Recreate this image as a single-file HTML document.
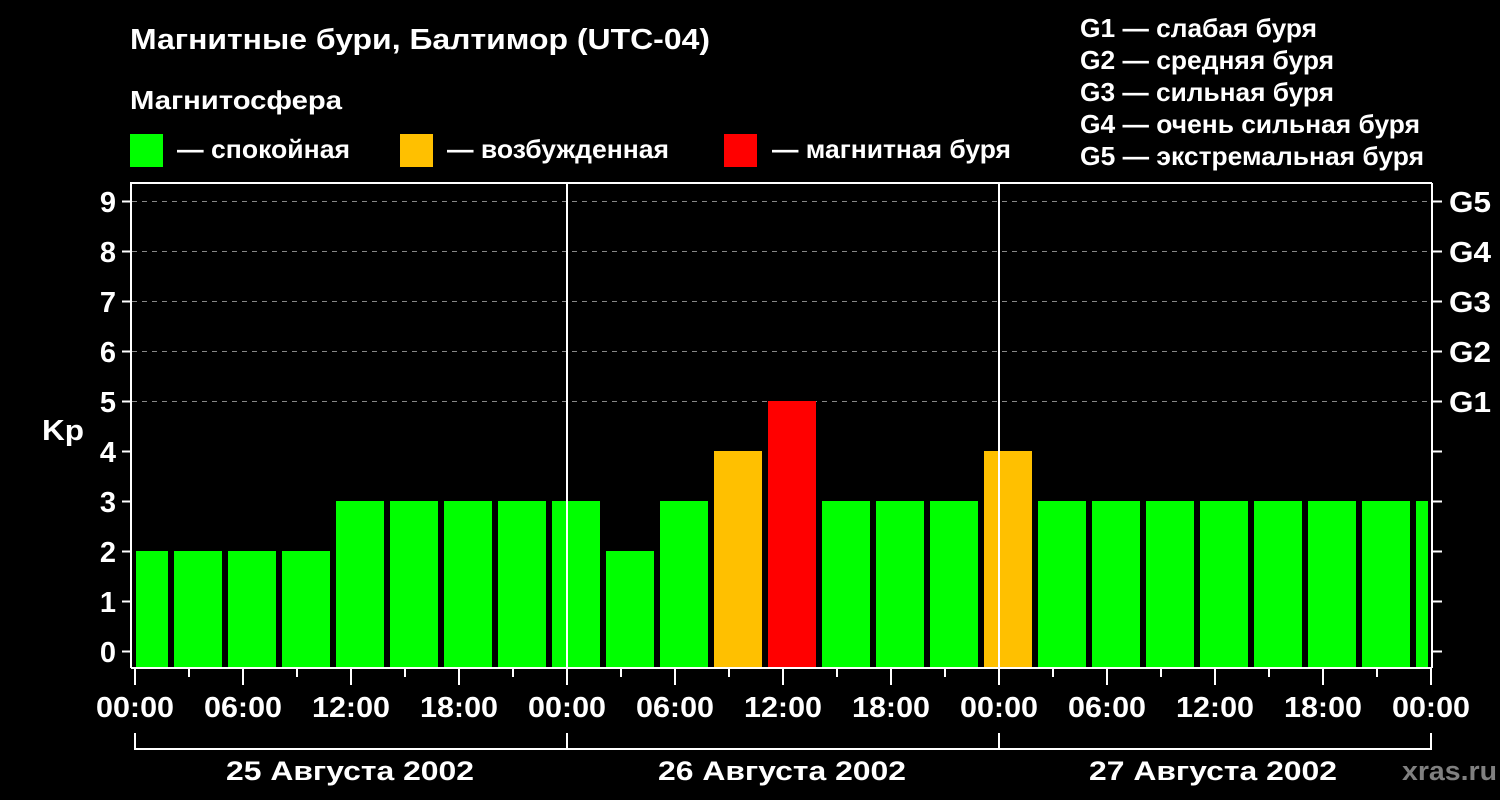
<!DOCTYPE html>
<html><head><meta charset="utf-8"><style>
html,body{margin:0;padding:0;background:#000;}
svg{display:block;font-family:"Liberation Sans",sans-serif;font-weight:bold;}
</style></head><body>
<svg width="1500" height="800" viewBox="0 0 1500 800" xmlns="http://www.w3.org/2000/svg">
<rect width="1500" height="800" fill="#000"/>
<g fill="#fff" font-size="26" lengthAdjust="spacingAndGlyphs">
<text x="130" y="49" font-size="29" textLength="580" lengthAdjust="spacingAndGlyphs">Магнитные бури, Балтимор (UTC-04)</text>
<text x="130" y="109" textLength="212" lengthAdjust="spacingAndGlyphs">Магнитосфера</text>
<text x="177" y="158" textLength="173" lengthAdjust="spacingAndGlyphs">— спокойная</text>
<text x="447" y="158" textLength="222" lengthAdjust="spacingAndGlyphs">— возбужденная</text>
<text x="772" y="158" textLength="239" lengthAdjust="spacingAndGlyphs">— магнитная буря</text>
<text x="1080" y="37" textLength="237" lengthAdjust="spacingAndGlyphs">G1 — слабая буря</text>
<text x="1080" y="69" textLength="254" lengthAdjust="spacingAndGlyphs">G2 — средняя буря</text>
<text x="1080" y="101" textLength="254" lengthAdjust="spacingAndGlyphs">G3 — сильная буря</text>
<text x="1080" y="133" textLength="340" lengthAdjust="spacingAndGlyphs">G4 — очень сильная буря</text>
<text x="1080" y="165" textLength="344" lengthAdjust="spacingAndGlyphs">G5 — экстремальная буря</text>
</g>
<rect x="130" y="134" width="33" height="33" fill="#00ff00"/>
<rect x="400" y="134" width="33" height="33" fill="#ffc000"/>
<rect x="724" y="134" width="33" height="33" fill="#ff0000"/>
<g stroke="#888" stroke-width="1" stroke-dasharray="5,5">
<line x1="132" y1="201.5" x2="1432" y2="201.5"/>
<line x1="132" y1="251.5" x2="1432" y2="251.5"/>
<line x1="132" y1="301.5" x2="1432" y2="301.5"/>
<line x1="132" y1="351.5" x2="1432" y2="351.5"/>
<line x1="132" y1="401.5" x2="1432" y2="401.5"/>
</g>
<g fill="#00ff00">
<rect x="136" y="551" width="32" height="117"/>
<rect x="174" y="551" width="48" height="117"/>
<rect x="228" y="551" width="48" height="117"/>
<rect x="282" y="551" width="48" height="117"/>
<rect x="336" y="501" width="48" height="167"/>
<rect x="390" y="501" width="48" height="167"/>
<rect x="444" y="501" width="48" height="167"/>
<rect x="498" y="501" width="48" height="167"/>
<rect x="552" y="501" width="48" height="167"/>
<rect x="606" y="551" width="48" height="117"/>
<rect x="660" y="501" width="48" height="167"/>
<rect x="822" y="501" width="48" height="167"/>
<rect x="876" y="501" width="48" height="167"/>
<rect x="930" y="501" width="48" height="167"/>
<rect x="1038" y="501" width="48" height="167"/>
<rect x="1092" y="501" width="48" height="167"/>
<rect x="1146" y="501" width="48" height="167"/>
<rect x="1200" y="501" width="48" height="167"/>
<rect x="1254" y="501" width="48" height="167"/>
<rect x="1308" y="501" width="48" height="167"/>
<rect x="1362" y="501" width="48" height="167"/>
<rect x="1416" y="501" width="12" height="167"/>
</g>
<rect x="714" y="451" width="48" height="217" fill="#ffc000"/>
<rect x="984" y="451" width="48" height="217" fill="#ffc000"/>
<rect x="768" y="401" width="48" height="267" fill="#ff0000"/>
<line x1="567" y1="183" x2="567" y2="668" stroke="#fff" stroke-width="2"/>
<line x1="999" y1="183" x2="999" y2="668" stroke="#fff" stroke-width="2"/>
<g stroke="#fff" stroke-width="2" fill="none">
<polyline points="131,668 131,183 1432,183"/>
<line x1="131" y1="668" x2="1432" y2="668"/>
<line x1="1432" y1="183" x2="1432" y2="668"/>
</g>
<g stroke="#fff" stroke-width="2">
<line x1="122" y1="201.5" x2="131" y2="201.5"/><line x1="122" y1="251.5" x2="131" y2="251.5"/>
<line x1="122" y1="301.5" x2="131" y2="301.5"/><line x1="122" y1="351.5" x2="131" y2="351.5"/>
<line x1="122" y1="401.5" x2="131" y2="401.5"/><line x1="122" y1="451.5" x2="131" y2="451.5"/>
<line x1="122" y1="501.5" x2="131" y2="501.5"/><line x1="122" y1="551.5" x2="131" y2="551.5"/>
<line x1="122" y1="601.5" x2="131" y2="601.5"/><line x1="122" y1="651.5" x2="131" y2="651.5"/>
<line x1="1432" y1="201.5" x2="1442" y2="201.5"/><line x1="1432" y1="251.5" x2="1442" y2="251.5"/>
<line x1="1432" y1="301.5" x2="1442" y2="301.5"/><line x1="1432" y1="351.5" x2="1442" y2="351.5"/>
<line x1="1432" y1="401.5" x2="1442" y2="401.5"/><line x1="1432" y1="451.5" x2="1442" y2="451.5"/>
<line x1="1432" y1="501.5" x2="1442" y2="501.5"/><line x1="1432" y1="551.5" x2="1442" y2="551.5"/>
<line x1="1432" y1="601.5" x2="1442" y2="601.5"/><line x1="1432" y1="651.5" x2="1442" y2="651.5"/>
</g>
<g fill="#fff" font-size="29" text-anchor="end">
<text x="116" y="212">9</text><text x="116" y="262">8</text><text x="116" y="312">7</text>
<text x="116" y="362">6</text><text x="116" y="412">5</text><text x="116" y="462">4</text>
<text x="116" y="512">3</text><text x="116" y="562">2</text><text x="116" y="612">1</text>
<text x="116" y="662">0</text>
</g>
<text x="42" y="440" fill="#fff" font-size="29" textLength="42" lengthAdjust="spacingAndGlyphs">Kp</text>
<g fill="#fff" font-size="29">
<text x="1449" y="212" textLength="42" lengthAdjust="spacingAndGlyphs">G5</text>
<text x="1449" y="262" textLength="42" lengthAdjust="spacingAndGlyphs">G4</text>
<text x="1449" y="312" textLength="42" lengthAdjust="spacingAndGlyphs">G3</text>
<text x="1449" y="362" textLength="42" lengthAdjust="spacingAndGlyphs">G2</text>
<text x="1449" y="412" textLength="42" lengthAdjust="spacingAndGlyphs">G1</text>
</g>
<g stroke="#fff" stroke-width="2">
<line x1="135" y1="668" x2="135" y2="685"/><line x1="243" y1="668" x2="243" y2="685"/>
<line x1="351" y1="668" x2="351" y2="685"/><line x1="459" y1="668" x2="459" y2="685"/>
<line x1="567" y1="668" x2="567" y2="685"/><line x1="675" y1="668" x2="675" y2="685"/>
<line x1="783" y1="668" x2="783" y2="685"/><line x1="891" y1="668" x2="891" y2="685"/>
<line x1="999" y1="668" x2="999" y2="685"/><line x1="1107" y1="668" x2="1107" y2="685"/>
<line x1="1215" y1="668" x2="1215" y2="685"/><line x1="1323" y1="668" x2="1323" y2="685"/>
<line x1="1431" y1="668" x2="1431" y2="685"/>
<line x1="189" y1="668" x2="189" y2="677"/><line x1="297" y1="668" x2="297" y2="677"/>
<line x1="405" y1="668" x2="405" y2="677"/><line x1="513" y1="668" x2="513" y2="677"/>
<line x1="621" y1="668" x2="621" y2="677"/><line x1="729" y1="668" x2="729" y2="677"/>
<line x1="837" y1="668" x2="837" y2="677"/><line x1="945" y1="668" x2="945" y2="677"/>
<line x1="1053" y1="668" x2="1053" y2="677"/><line x1="1161" y1="668" x2="1161" y2="677"/>
<line x1="1269" y1="668" x2="1269" y2="677"/><line x1="1377" y1="668" x2="1377" y2="677"/>
<polyline points="135,733 135,749 1431,749 1431,733" fill="none"/>
<line x1="567" y1="733" x2="567" y2="749"/><line x1="999" y1="733" x2="999" y2="749"/>
</g>
<g fill="#fff" font-size="29" text-anchor="middle">
<text x="135" y="717" textLength="78" lengthAdjust="spacingAndGlyphs">00:00</text>
<text x="243" y="717" textLength="78" lengthAdjust="spacingAndGlyphs">06:00</text>
<text x="351" y="717" textLength="78" lengthAdjust="spacingAndGlyphs">12:00</text>
<text x="459" y="717" textLength="78" lengthAdjust="spacingAndGlyphs">18:00</text>
<text x="567" y="717" textLength="78" lengthAdjust="spacingAndGlyphs">00:00</text>
<text x="675" y="717" textLength="78" lengthAdjust="spacingAndGlyphs">06:00</text>
<text x="783" y="717" textLength="78" lengthAdjust="spacingAndGlyphs">12:00</text>
<text x="891" y="717" textLength="78" lengthAdjust="spacingAndGlyphs">18:00</text>
<text x="999" y="717" textLength="78" lengthAdjust="spacingAndGlyphs">00:00</text>
<text x="1107" y="717" textLength="78" lengthAdjust="spacingAndGlyphs">06:00</text>
<text x="1215" y="717" textLength="78" lengthAdjust="spacingAndGlyphs">12:00</text>
<text x="1323" y="717" textLength="78" lengthAdjust="spacingAndGlyphs">18:00</text>
<text x="1431" y="717" textLength="78" lengthAdjust="spacingAndGlyphs">00:00</text>
<text x="350" y="780" font-size="27" textLength="248" lengthAdjust="spacingAndGlyphs">25 Августа 2002</text>
<text x="782" y="780" font-size="27" textLength="248" lengthAdjust="spacingAndGlyphs">26 Августа 2002</text>
<text x="1213" y="780" font-size="27" textLength="248" lengthAdjust="spacingAndGlyphs">27 Августа 2002</text>
</g>
<text x="1402" y="780" fill="#808080" font-size="27" textLength="95" lengthAdjust="spacingAndGlyphs">xras.ru</text>
</svg>
</body></html>
